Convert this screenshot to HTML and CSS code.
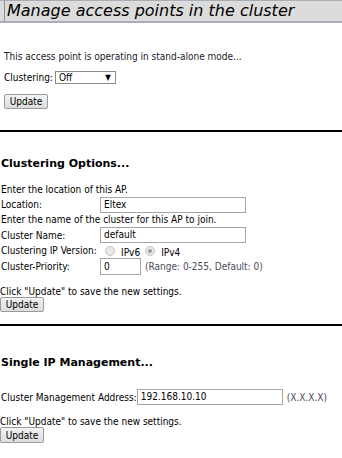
FILE: index.html
```html
<!DOCTYPE html>
<html lang="en">
<head>
    <meta charset="UTF-8">
    <title>Cluster</title>
    <link rel="stylesheet" href="styles.css">
</head>
<body>

<div class="titlebar"><h1>Manage access points in the cluster</h1></div>

<div class="sec1">
    <p class="msg">This access point is operating in stand-alone mode...</p>
    <div class="line">
        <span>Clustering:</span>
        <span class="select">Off<span class="arrow">&#9660;</span></span>
    </div>
    <button class="btn btn-first">Update</button>
</div>

<hr class="rule">

<h2>Clustering Options...</h2>
<div class="form">
    <div class="row">Enter the location of this AP.</div>
    <div class="row"><span class="label">Location:</span><span class="field w146">Eltex</span></div>
    <div class="row">Enter the name of the cluster for this AP to join.</div>
    <div class="row r16"><span class="label">Cluster Name:</span><span class="field w146">default</span></div>
    <div class="row"><span class="label">Clustering IP Version:</span>
        <span class="radio"></span><span class="rlabel">IPv6</span>
        <span class="radio on"></span><span class="rlabel">IPv4</span>
    </div>
    <div class="row r17"><span class="label">Cluster-Priority:</span><span class="field w41 h17">0</span><span class="hint">(Range: 0-255, Default: 0)</span></div>
</div>
<p class="save">Click "Update" to save the new settings.</p>
<button class="btn">Update</button>

<hr class="rule rule2">

<h2 class="h-ip">Single IP Management...</h2>
<div class="row ip-row"><span class="label-ip">Cluster Management Address:</span><span class="field w146">192.168.10.10</span><span class="hint">(X.X.X.X)</span></div>
<p class="save save2">Click "Update" to save the new settings.</p>
<button class="btn btn-last">Update</button>

</body>
</html>
```

FILE: styles.css
```css
body { margin: 0; font-family: "DejaVu Sans", Verdana, sans-serif; font-stretch: condensed; font-size: 10px; color: #000; }
.titlebar { background-color: #dcdcdc; border-top: 1px solid #a8aeb6; border-bottom: 2px solid #a8aeb6; padding-left: 4px; height: 20px; }
h1 { margin: 0; height: 20px; border-left: 1px solid #8c8c8c; padding-left: 2px; font-size: 16px; font-weight: normal; font-style: italic; line-height: 20px; font-stretch: normal; white-space: nowrap; }
.sec1 { padding-left: 4px; }
.msg { margin: 28px 0 0; line-height: 12px; color: #1a1a2e; }
.line { display: flex; align-items: center; margin-top: 8px; height: 12px; }
.select { display: inline-flex; align-items: center; justify-content: space-between; margin-left: 2px; width: 52px; height: 11px; border: 1px solid #8a8a8a; padding: 0 4px 0 3px; font-size: 10px; box-sizing: content-box; }
.arrow { font-size: 8px; }
.btn { display: block; font-family: inherit; font-stretch: condensed; font-size: 10px; height: 15px; width: 44px; padding: 0; line-height: 13px; background: linear-gradient(#f4f4f4, #dcdcdc); border: 1px solid #9a9a9a; border-radius: 2px; color: #000; }
.btn-first { margin-top: 11px; }
.btn-last { height: 16px; }
.rule { margin: 21px 0 0; border: 0; height: 2px; background-color: #000; }
.rule2 { margin-top: 12px; }
h2 { margin: 25px 0 0 1px; font-size: 11px; line-height: 14px; font-weight: bold; font-stretch: normal; }
.form { margin-top: 11px; padding-left: 1px; }
.row { display: flex; align-items: center; height: 15px; white-space: nowrap; }
.r16 { height: 16px; }
.r17 { height: 17px; }
.label { width: 99px; }
.field { display: inline-block; box-sizing: border-box; height: 16px; line-height: 14px; border: 1px solid #a6a6a6; padding-left: 3px; }
.w146 { width: 146px; }
.w41 { width: 41px; }
.h17 { height: 17px; line-height: 15px; }
.hint { margin-left: 4px; color: #4a4a5a; }
.radio { display: inline-block; width: 10px; height: 10px; border-radius: 50%; border: 1px solid #c4c4c4; background: #e8e8e8; margin: 0 6px 0 5px; box-sizing: border-box; position: relative; }
.radio.on::after { content: ""; position: absolute; left: 2px; top: 2px; width: 4px; height: 4px; border-radius: 50%; background: #9a9a9a; }
.rlabel { margin-top: 3px; }
.save { margin: 11px 0 0; line-height: 11px; }
.h-ip { margin-top: 30px; }
.ip-row { margin-top: 19px; padding-left: 1px; height: 16px; }
.save2 { margin-top: 11px; }
```
